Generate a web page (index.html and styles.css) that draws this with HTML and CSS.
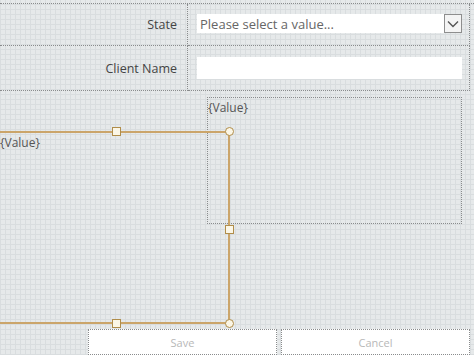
FILE: index.html
```html
<!DOCTYPE html>
<html lang="en">
<head>
  <meta charset="UTF-8">
  <title>Form Designer</title>
  <link rel="stylesheet" href="styles.css">
</head>
<body>
  <div class="surface">

    <div class="form-table">
      <div class="label-cell">State</div>
      <div class="field-cell">
        <div class="select">
          <span class="placeholder">Please select a value...</span>
          <span class="drop-btn">
            <svg width="12" height="8" viewBox="0 0 12 8"><path d="M1 1.5 L6 6.5 L11 1.5" fill="none" stroke="#555" stroke-width="1.4"/></svg>
          </span>
        </div>
      </div>
      <div class="label-cell">Client Name</div>
      <div class="field-cell">
        <div class="text-input"></div>
      </div>
    </div>

    <!-- design canvas -->
    <div class="canvas">
      <div class="value-box">{Value}</div>

      <div class="selected-box">
        <span class="box-text">{Value}</span>
        <span class="handle sq tm"></span>
        <span class="handle ci tr"></span>
        <span class="handle sq mr"></span>
        <span class="handle ci br"></span>
        <span class="handle sq bm"></span>
        <span class="handle sq ml"></span>
        <span class="handle ci tl"></span>
        <span class="handle ci bl"></span>
      </div>
    </div>

    <div class="button-row">
      <div class="btn">Save</div>
      <div class="btn">Cancel</div>
    </div>

  </div>
</body>
</html>
```

FILE: styles.css
```css
body {
  margin: 0;
  font-family: "Open Sans", "Noto Sans", sans-serif;
  overflow: hidden;
}

.surface {
  width: 474px;
  height: 355px;
  background-color: #e6e9ea;
  background-image:
    repeating-linear-gradient(90deg, #d9dddf 0 1px, transparent 1px 5px),
    repeating-linear-gradient(0deg, #d9dddf 0 1px, transparent 1px 5px);
  padding-top: 3px;
  box-sizing: border-box;
}

.form-table {
  display: grid;
  grid-template-columns: 188px 282px;
  grid-template-rows: 42px 45px;
  border-top: 1px dotted #8a8c8d;
}

.label-cell {
  border-bottom: 1px dotted #8a8c8d;
  border-right: 1px dotted #8a8c8d;
  display: flex;
  align-items: center;
  justify-content: flex-end;
  padding-right: 10px;
  box-sizing: border-box;
  font-size: 12.5px;
  color: #444;
}

.field-cell {
  box-sizing: border-box;
  border-bottom: 1px dotted #8a8c8d;
  border-right: 1px dotted #8a8c8d;
  display: flex;
  align-items: center;
  padding-left: 9px;
  padding-right: 7px;
}

.select {
  flex: 1;
  height: 19px;
  background: #fff;
  display: flex;
  align-items: center;
  justify-content: space-between;
  margin-top: -2px;
}

.placeholder {
  font-size: 13px;
  color: #666;
  padding-left: 3px;
}

.drop-btn {
  width: 16px;
  height: 17px;
  border: 1px solid #8e8e8e;
  background: #f4f4f4;
  display: flex;
  align-items: center;
  justify-content: center;
}

.text-input {
  flex: 1;
  height: 22px;
  background: #fff;
}

.canvas {
  position: relative;
  height: 238px;
}

.value-box {
  position: absolute;
  left: 207px;
  top: 6px;
  width: 255px;
  height: 127px;
  border: 1px dotted #8a8c8d;
  font-size: 12px;
  color: #555;
  line-height: 18px;
  padding-top: 1px;
  box-sizing: border-box;
}

.selected-box {
  position: absolute;
  left: -40px;
  top: 40px;
  width: 270px;
  height: 193px;
  box-sizing: border-box;
  border: 2px solid #cba56a;
}

.box-text {
  position: absolute;
  left: 38px;
  top: 1px;
  font-size: 12px;
  color: #555;
  line-height: 18px;
}

.handle {
  position: absolute;
  width: 7px;
  height: 7px;
  background: #fbf6e6;
  border: 1px solid #b08d4a;
}

.handle.ci {
  border-radius: 50%;
}

.tm { left: 150px; top: -6px; }
.tr { right: -6px; top: -6px; }
.mr { right: -6px; top: 92px; }
.br { right: -6px; bottom: -6px; }
.bm { left: 150px; bottom: -6px; }
.ml { left: -6px; top: 92px; }
.tl { left: -6px; top: -6px; }
.bl { left: -6px; bottom: -6px; }

.button-row {
  display: flex;
  gap: 4px;
  padding-left: 88px;
}

.btn {
  width: 189px;
  height: 26px;
  box-sizing: border-box;
  background: #fff;
  border: 1px dotted #8a8c8d;
  font-size: 11px;
  color: #b8b8b8;
  display: flex;
  align-items: center;
  justify-content: center;
}
```
